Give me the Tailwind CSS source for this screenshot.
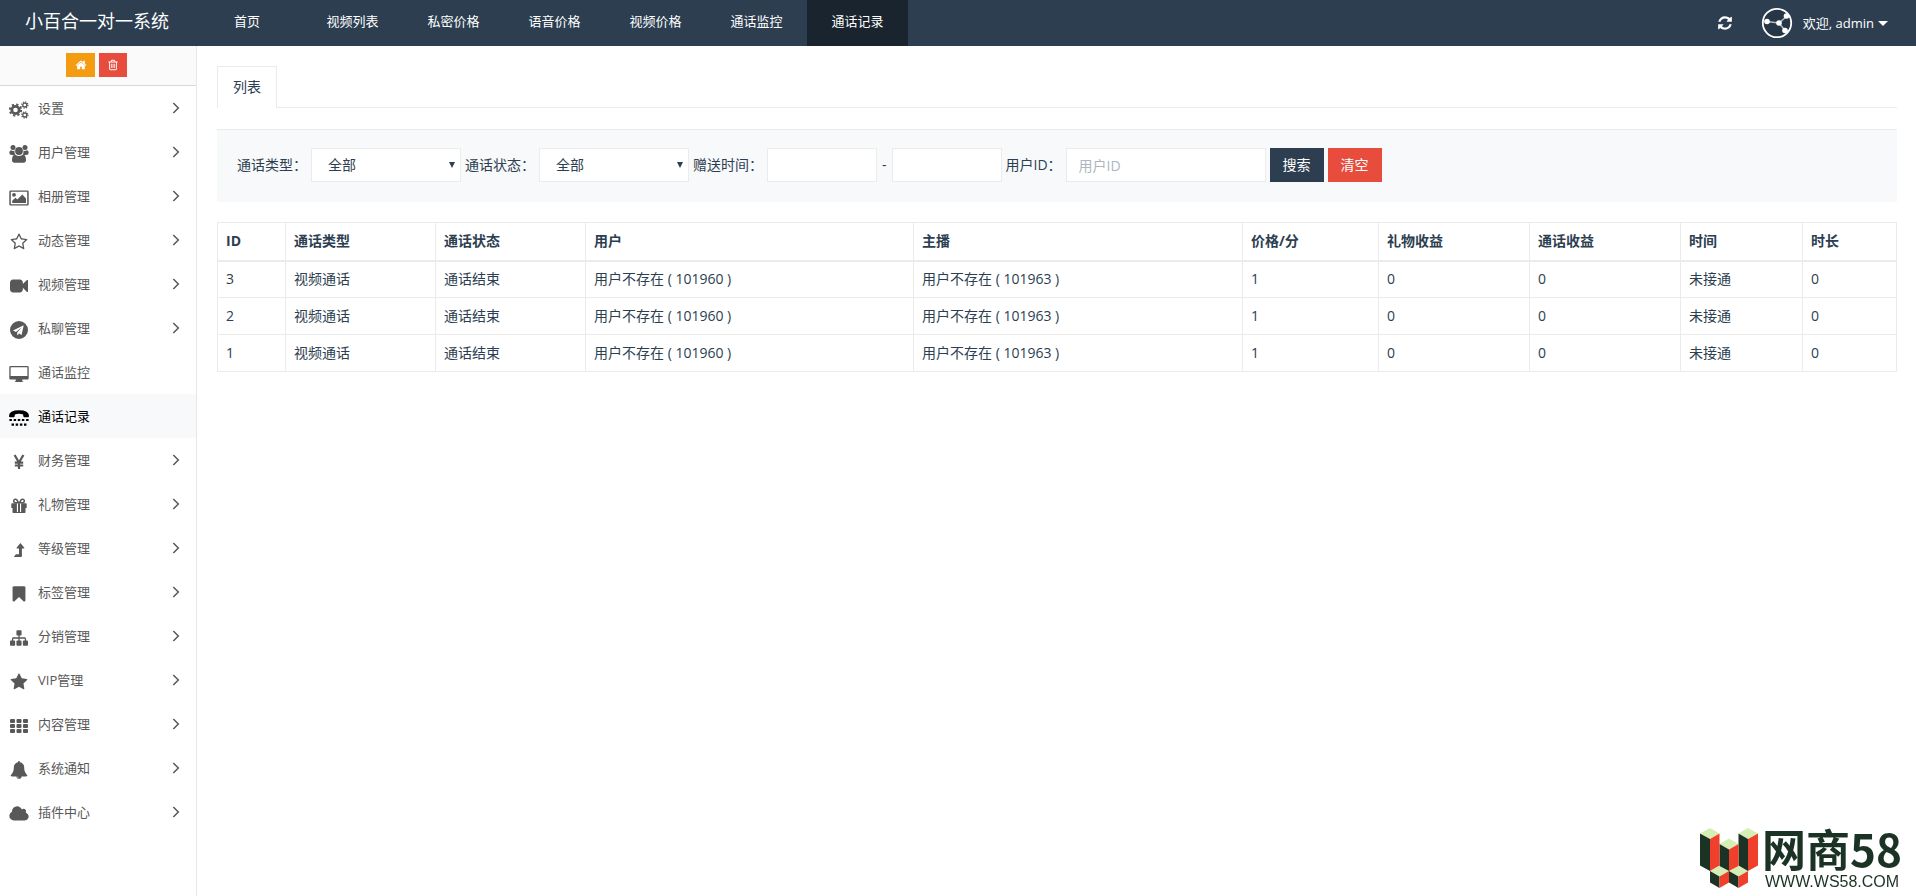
<!DOCTYPE html>
<html lang="zh-CN">
<head>
    <meta charset="UTF-8">
    <meta name="viewport" content="width=device-width, initial-scale=1.0">
    <title>小百合一对一系统</title>
    <script src="https://cdn.jsdelivr.net/npm/@tailwindcss/browser@4"></script>
</head>
<body class="min-h-screen flex flex-col bg-white text-sm text-[#2c3e50] font-['Open_Sans','Noto_Sans_CJK_SC',sans-serif]">

<!-- Icons -->
<svg class="hidden" xmlns="http://www.w3.org/2000/svg">
    <symbol id="i-home" viewBox="0 0 1792 1792"><path d="M1472 992v480q0 26-19 45t-45 19h-384v-384h-256v384h-384q-26 0-45-19t-19-45v-480q0-1 .5-3t.5-3l575-474 575 474q1 2 1 6zm223-69l-62 74q-8 9-21 11h-3q-13 0-21-7l-692-577-692 577q-12 8-24 7-13-2-21-11l-62-74q-8-10-7-23.5t11-21.5l719-599q32-26 76-26t76 26l244 204v-195q0-14 9-23t23-9h192q14 0 23 9t9 23v408l219 182q10 8 11 21.5t-7 23.5z"/></symbol>
    <symbol id="i-trash" viewBox="0 0 1792 1792"><path d="M704 736v576q0 14-9 23t-23 9h-64q-14 0-23-9t-9-23v-576q0-14 9-23t23-9h64q14 0 23 9t9 23zm256 0v576q0 14-9 23t-23 9h-64q-14 0-23-9t-9-23v-576q0-14 9-23t23-9h64q14 0 23 9t9 23zm256 0v576q0 14-9 23t-23 9h-64q-14 0-23-9t-9-23v-576q0-14 9-23t23-9h64q14 0 23 9t9 23zm128 724v-948h-896v948q0 22 7 40.5t14.5 27 10.5 8.5h832q3 0 10.5-8.5t14.5-27 7-40.5zm-672-1076h448l-48-117q-7-9-17-11h-317q-10 2-17 11zm928 32v64q0 14-9 23t-23 9h-96v948q0 83-47 143.5t-113 60.5h-832q-66 0-113-58.5t-47-141.5v-952h-96q-14 0-23-9t-9-23v-64q0-14 9-23t23-9h309l70-167q15-37 54-63t79-26h320q40 0 79 26t54 63l70 167h309q14 0 23 9t9 23z"/></symbol>
    <symbol id="i-refresh" viewBox="0 0 1792 1792"><path d="M1639 1056q0 5-1 7-64 268-268 434.5t-478 166.5q-146 0-282.5-55t-243.5-157l-129 129q-19 19-45 19t-45-19-19-45v-448q0-26 19-45t45-19h448q26 0 45 19t19 45-19 45l-137 137q71 66 161 102t187 36q134 0 250-65t186-179q11-17 53-117 8-23 30-23h192q13 0 22.5 9.5t9.5 22.5zm25-800v448q0 26-19 45t-45 19h-448q-26 0-45-19t-19-45 19-45l138-138q-148-137-349-137-134 0-250 65t-186 179q-11 17-53 117-8 23-30 23h-199q-13 0-22.5-9.5t-9.5-22.5v-7q65-268 270-434.5t480-166.5q146 0 284 55.5t245 156.5l130-129q19-19 45-19t45 19 19 45z"/></symbol>
    <symbol id="i-cogs" viewBox="0 0 20 18">
        <g fill="none" stroke="currentColor">
            <circle cx="6.5" cy="9" r="3.7" stroke-width="2.8"/>
            <circle cx="6.5" cy="9" r="5.6" stroke-width="2" stroke-dasharray="2.2 2.198"/>
            <circle cx="15.8" cy="4" r="2" stroke-width="1.3"/>
            <circle cx="15.8" cy="4" r="3.1" stroke-width="1.2" stroke-dasharray="1.2 1.235"/>
            <circle cx="15.8" cy="14" r="2" stroke-width="1.3"/>
            <circle cx="15.8" cy="14" r="3.1" stroke-width="1.2" stroke-dasharray="1.2 1.235"/>
        </g>
    </symbol>
    <symbol id="i-users" viewBox="0 0 20 18">
        <circle cx="4" cy="2.6" r="2.5"/><circle cx="16" cy="2.6" r="2.5"/><circle cx="10" cy="6" r="3.9"/>
        <path d="M2 5.2q2 1.3 3.500 .4q-.4 2.500 1 4.300H3Q.3 9.900 .3 8q0-2.600 1.700-2.800zM18 5.200q-2 1.300-3.500 .4q.4 2.500-1 4.300H17q2.700 0 2.700-1.900q0-2.600-1.700-2.800zM6.200 9.700q3.800 2.600 7.600 0q3.200 0 3.200 5.300q0 2.800-2.600 2.800H5.600Q3 17.800 3 15q0-5.300 3.200-5.300z"/>
    </symbol>
    <symbol id="i-image" viewBox="0 0 20 18">
        <path fill-rule="evenodd" d="M1.500 1.500h17q1.200 0 1.200 1.200v12.600q0 1.200-1.200 1.200h-17Q.3 16.500 .3 15.300V2.700q0-1.200 1.200-1.200zm.3 1.300v12.400h16.400V2.800z"/>
        <circle cx="5" cy="5.800" r="1.900"/><path d="M3.200 14v-2.200l3.200-3.100 1.900 1.800 5-5 3.700 3.900V14z"/>
    </symbol>
    <symbol id="i-star-o" viewBox="0 0 1792 1792"><path d="M1201 1004l306-297-422-62-189-382-189 382-422 62 306 297-73 421 378-199 377 199zm527-357q0 22-26 48l-363 354 86 500q1 7 1 20 0 50-41 50-19 0-40-12l-449-236-449 236q-22 12-40 12-21 0-31.500-14.500t-10.500-35.500q0-6 2-20l86-500-364-354q-25-27-25-48 0-37 56-46l502-73 225-455q19-41 49-41t49 41l225 455 502 73q56 9 56 46z"/></symbol>
    <symbol id="i-star" viewBox="0 0 1792 1792"><path d="M1728 647q0 22-26 48l-363 354 86 500q1 7 1 20 0 21-10.500 35.500t-30.500 14.500q-19 0-40-12l-449-236-449 236q-22 12-40 12-21 0-31.500-14.500t-10.500-35.500q0-6 2-20l86-500-364-354q-25-27-25-48 0-37 56-46l502-73 225-455q19-41 49-41t49 41l225 455 502 73q56 9 56 46z"/></symbol>
    <symbol id="i-video" viewBox="0 0 1792 1792"><path d="M1792 352v1088q0 42-39 59-13 5-25 5-27 0-45-19l-403-403v166q0 119-84.500 203.500t-203.500 84.500h-704q-119 0-203.500-84.500t-84.500-203.500v-704q0-119 84.500-203.500t203.500-84.500h704q119 0 203.500 84.500t84.500 203.500v165l403-402q18-19 45-19 12 0 25 5 39 17 39 59z"/></symbol>
    <symbol id="i-telegram" viewBox="0 0 18 18"><path fill-rule="evenodd" d="M9 0a9 9 0 1 1 0 18a9 9 0 0 1 0-18zM13.700 4.200L3 9.400l3 1.500 5.800-4.600-4.600 5.300v3l1.900-2 2.500 1.300z"/></symbol>
    <symbol id="i-desktop" viewBox="0 0 20 18"><path fill-rule="evenodd" d="M1.600 1h16.800q1.300 0 1.300 1.300v10.900q0 1.300-1.300 1.300h-5.200v1.200q.8 .4 .8 1.300H6q0-.9 .8-1.300v-1.200H1.600Q.3 14.500 .3 13.200V2.300Q.3 1 1.600 1zm0 1.200v8.900h16.800V2.200z"/></symbol>
    <symbol id="i-tty" viewBox="0 0 18 16">
        <path d="M0 6.200Q0 1 9 1t9 5.200q0 1.100-1 1.100h-3.200q-1 0-1-1V4.800Q9 3.600 5.200 4.800v1.500q0 1-1 1H1q-1 0-1-1.100z"/>
        <path d="M.4 8.800h2.200v2H.4zM4.200 8.800h2.200v2H4.200zM7.900 8.800h2.200v2H7.900zM11.600 8.800h2.200v2h-2.200zM15.400 8.800h2.200v2h-2.200zM2.300 13h2.200v2H2.300zM6 13h2.200v2H6zM9.800 13H12v2H9.800zM13.500 13h2.200v2h-2.200z"/>
    </symbol>
    <symbol id="i-jpy" viewBox="0 0 18 18"><path fill="none" stroke="currentColor" stroke-width="2.200" d="M4.600 2L9 9.600 13.400 2M9 9v7M4.800 9.700h8.400M4.800 12.500h8.400"/></symbol>
    <symbol id="i-gift" viewBox="0 0 18 18">
        <path fill="none" stroke="currentColor" stroke-width="1.500" d="M8.600 5.800H5.500a1.800 1.800 0 1 1 1.300-3zM9.400 5.800h3.100a1.800 1.800 0 1 0-1.300-3z"/>
        <path d="M2.100 6.300h4.800v9.800H3.300q-.8 0-.8-.8v-4.200h-.4q-.8 0-.8-.6V7q0-.7 .8-.7zM15.900 6.300h-4.800v9.800h3.600q.8 0 .8-.8v-4.200h.4q.8 0 .8-.6V7q0-.7-.8-.7zM6.900 14.900h4.200v1.200H6.900zM8 6.300h2v9H8z"/>
    </symbol>
    <symbol id="i-level" viewBox="0 0 18 18"><path d="M10.400 2l3.900 4.700q.4 .7-.4 .7h-2v7.800q0 .8-.8 .8H4.400L4 15.600l2-2.300h3V7.400H7q-.8 0-.4-.7z"/></symbol>
    <symbol id="i-bookmark" viewBox="0 0 1792 1792"><path d="M1420 128q23 0 44 9 33 13 52.500 41t19.500 62v1289q0 34-19.500 62t-52.500 41q-19 8-44 8-48 0-83-32l-441-424-441 424q-36 33-83 33-23 0-44-9-33-13-52.500-41t-19.500-62v-1289q0-34 19.500-62t52.500-41q21-9 44-9h1048z"/></symbol>
    <symbol id="i-sitemap" viewBox="0 0 1792 1792"><path d="M1792 1248v320q0 40-28 68t-68 28h-320q-40 0-68-28t-28-68v-320q0-40 28-68t68-28h96v-192h-512v192h96q40 0 68 28t28 68v320q0 40-28 68t-68 28h-320q-40 0-68-28t-28-68v-320q0-40 28-68t68-28h96v-192h-512v192h96q40 0 68 28t28 68v320q0 40-28 68t-68 28h-320q-40 0-68-28t-28-68v-320q0-40 28-68t68-28h96v-192q0-52 38-90t90-38h512v-192h-96q-40 0-68-28t-28-68v-320q0-40 28-68t68-28h320q40 0 68 28t28 68v320q0 40-28 68t-68 28h-96v192h512q52 0 90 38t38 90v192h96q40 0 68 28t28 68z"/></symbol>
    <symbol id="i-th" viewBox="0 0 18 18">
        <g id="th-row"><rect y="2" width="5" height="4" rx="1"/><rect x="6.500" y="2" width="5" height="4" rx="1"/><rect x="13" y="2" width="5" height="4" rx="1"/></g>
        <use href="#th-row" y="5"/><use href="#th-row" y="10"/>
    </symbol>
    <symbol id="i-bell" viewBox="0 0 1792 1792"><path d="M912 1696q0-16-16-16-59 0-101.500-42.500t-42.500-101.500q0-16-16-16t-16 16q0 73 51.500 124.500t124.500 51.500q16 0 16-16zm816-288q0 52-38 90t-90 38h-448q0 106-75 181t-181 75-181-75-75-181h-448q-52 0-90-38t-38-90q50-42 91-88t85-119.500 74.500-158.500 50-206 19.500-260q0-152 117-282.500t307-158.500q-8-19-8-39 0-40 28-68t68-28 68 28 28 68q0 20-8 39 190 28 307 158.500t117 282.500q0 139 19.500 260t50 206 74.500 158.500 85 119.500 91 88z"/></symbol>
    <symbol id="i-cloud" viewBox="64 0 1920 1792"><path d="M1984 1152q0 159-112.500 271.500t-271.500 112.500h-1088q-185 0-316.500-131.500t-131.500-316.500q0-132 71-241.500t187-163.500q-2-28-2-43 0-212 150-362t362-150q158 0 286.500 88t187.500 230q70-62 166-62 106 0 181 75t75 181q0 75-41 138 129 30 213 134.500t84 239.500z"/></symbol>
    <symbol id="i-angle" viewBox="0 0 8 12"><path fill="none" stroke="currentColor" stroke-width="1.500" d="M1.300 1l5 5-5 5"/></symbol>
</svg>

<!-- Header -->
<header class="flex h-[46px] bg-[#2c3e50] text-white text-[13px] whitespace-nowrap">
    <a href="#" class="w-48 pl-[25px] text-lg leading-[42px]">小百合一对一系统</a>
    <nav class="flex text-center leading-[43px]">
        <a href="#" class="w-[110px]">首页</a>
        <a href="#" class="w-[101px]">视频列表</a>
        <a href="#" class="w-[101px]">私密价格</a>
        <a href="#" class="w-[101px]">语音价格</a>
        <a href="#" class="w-[101px]">视频价格</a>
        <a href="#" class="w-[101px]">通话监控</a>
        <a href="#" class="w-[101px] bg-[#1a242f]">通话记录</a>
    </nav>
    <div class="ml-auto pr-7 flex items-center">
        <button type="button" aria-label="刷新" class="mr-7"><svg class="w-4 h-4 fill-current"><use href="#i-refresh"/></svg></button>
        <a href="#" class="flex items-center">
            <svg class="w-8 h-8 mr-[10px]" viewBox="0 0 32 32">
                <circle cx="16" cy="16" r="14.200" fill="#263646" stroke="#fff" stroke-width="1.800"/>
                <path d="M5.500 14.500L18 16l7.500-6.500M18 16l6 7.500" stroke="#aeb8c2" stroke-width="1.600" fill="none"/>
                <g fill="#fff"><circle cx="6" cy="14.500" r="2.800"/><circle cx="18" cy="16" r="2.800"/><circle cx="25.500" cy="9" r="2.800"/><circle cx="24" cy="23.500" r="2.800"/></g>
            </svg>
            欢迎, admin
            <svg class="w-[10px] h-[5px] ml-1 fill-current" viewBox="0 0 8 4"><path d="M0 0h8L4 4z"/></svg>
        </a>
    </div>
</header>

<div class="flex grow">
    <!-- Sidebar -->
    <aside class="w-[197px] shrink-0 border-r border-[#e7e7e7] text-[#585858] text-[13px]">
        <div class="h-10 pt-[7px] flex justify-center gap-1 bg-[#fafafa] border-b border-[#d8d8d8] pr-[3px]">
            <button type="button" aria-label="首页" class="w-[29px] h-6 flex items-center justify-center bg-[#f39c12] text-white"><svg class="w-3 h-3 fill-current"><use href="#i-home"/></svg></button>
            <button type="button" aria-label="清除缓存" class="w-7 h-6 flex items-center justify-center bg-[#e74c3c] text-white"><svg class="w-3 h-3 fill-current"><use href="#i-trash"/></svg></button>
        </div>
        <ul>
            <li><a href="#" class="flex items-center h-11 pl-[9px] pr-4"><svg class="w-5 h-[18px] mt-[3px] mr-[9px] fill-current"><use href="#i-cogs"/></svg>设置<svg class="w-2 h-3 ml-auto"><use href="#i-angle"/></svg></a></li>
            <li><a href="#" class="flex items-center h-11 pl-[9px] pr-4"><svg class="w-5 h-[18px] mt-[3px] mr-[9px] fill-current"><use href="#i-users"/></svg>用户管理<svg class="w-2 h-3 ml-auto"><use href="#i-angle"/></svg></a></li>
            <li><a href="#" class="flex items-center h-11 pl-[9px] pr-4"><svg class="w-5 h-[18px] mt-[3px] mr-[9px] fill-current"><use href="#i-image"/></svg>相册管理<svg class="w-2 h-3 ml-auto"><use href="#i-angle"/></svg></a></li>
            <li><a href="#" class="flex items-center h-11 pl-[9px] pr-4"><svg class="w-5 h-[18px] mt-[3px] mr-[9px] fill-current"><use href="#i-star-o"/></svg>动态管理<svg class="w-2 h-3 ml-auto"><use href="#i-angle"/></svg></a></li>
            <li><a href="#" class="flex items-center h-11 pl-[9px] pr-4"><svg class="w-5 h-[18px] mt-[3px] mr-[9px] fill-current"><use href="#i-video"/></svg>视频管理<svg class="w-2 h-3 ml-auto"><use href="#i-angle"/></svg></a></li>
            <li><a href="#" class="flex items-center h-11 pl-[9px] pr-4"><svg class="w-5 h-[18px] mt-[3px] mr-[9px] fill-current"><use href="#i-telegram"/></svg>私聊管理<svg class="w-2 h-3 ml-auto"><use href="#i-angle"/></svg></a></li>
            <li><a href="#" class="flex items-center h-11 pl-[9px] pr-4"><svg class="w-5 h-[18px] mt-[3px] mr-[9px] fill-current"><use href="#i-desktop"/></svg>通话监控</a></li>
            <li><a href="#" class="flex items-center h-11 pl-[9px] pr-4 bg-[#f8f9fb] text-black"><svg class="w-5 h-[18px] mt-[3px] mr-[9px] fill-current"><use href="#i-tty"/></svg>通话记录</a></li>
            <li><a href="#" class="flex items-center h-11 pl-[9px] pr-4"><svg class="w-5 h-[18px] mt-[3px] mr-[9px] fill-current"><use href="#i-jpy"/></svg>财务管理<svg class="w-2 h-3 ml-auto"><use href="#i-angle"/></svg></a></li>
            <li><a href="#" class="flex items-center h-11 pl-[9px] pr-4"><svg class="w-5 h-[18px] mt-[3px] mr-[9px] fill-current"><use href="#i-gift"/></svg>礼物管理<svg class="w-2 h-3 ml-auto"><use href="#i-angle"/></svg></a></li>
            <li><a href="#" class="flex items-center h-11 pl-[9px] pr-4"><svg class="w-5 h-[18px] mt-[3px] mr-[9px] fill-current"><use href="#i-level"/></svg>等级管理<svg class="w-2 h-3 ml-auto"><use href="#i-angle"/></svg></a></li>
            <li><a href="#" class="flex items-center h-11 pl-[9px] pr-4"><svg class="w-5 h-[18px] mt-[3px] mr-[9px] fill-current"><use href="#i-bookmark"/></svg>标签管理<svg class="w-2 h-3 ml-auto"><use href="#i-angle"/></svg></a></li>
            <li><a href="#" class="flex items-center h-11 pl-[9px] pr-4"><svg class="w-5 h-[18px] mt-[3px] mr-[9px] fill-current"><use href="#i-sitemap"/></svg>分销管理<svg class="w-2 h-3 ml-auto"><use href="#i-angle"/></svg></a></li>
            <li><a href="#" class="flex items-center h-11 pl-[9px] pr-4"><svg class="w-5 h-[18px] mt-[3px] mr-[9px] fill-current"><use href="#i-star"/></svg>VIP管理<svg class="w-2 h-3 ml-auto"><use href="#i-angle"/></svg></a></li>
            <li><a href="#" class="flex items-center h-11 pl-[9px] pr-4"><svg class="w-5 h-[18px] mt-[3px] mr-[9px] fill-current"><use href="#i-th"/></svg>内容管理<svg class="w-2 h-3 ml-auto"><use href="#i-angle"/></svg></a></li>
            <li><a href="#" class="flex items-center h-11 pl-[9px] pr-4"><svg class="w-5 h-[18px] mt-[3px] mr-[9px] fill-current"><use href="#i-bell"/></svg>系统通知<svg class="w-2 h-3 ml-auto"><use href="#i-angle"/></svg></a></li>
            <li><a href="#" class="flex items-center h-11 pl-[9px] pr-4"><svg class="w-5 h-[18px] mt-[3px] mr-[9px] fill-current"><use href="#i-cloud"/></svg>插件中心<svg class="w-2 h-3 ml-auto"><use href="#i-angle"/></svg></a></li>
        </ul>
    </aside>

    <!-- Content -->
    <main class="grow p-5 pr-[19px]">
        <div class="flex border-b border-[#ebebeb]">
            <a href="#" class="-mb-px px-[15px] h-[42px] leading-[40px] border border-b-0 border-[#ebebeb] bg-white">列表</a>
        </div>

        <form class="mt-[21px] px-5 pt-[18px] pb-5 flex flex-wrap items-center gap-1 bg-[#f8f9fb] border-t border-[#e8eaec]">
            <label for="type">通话类型：</label>
            <div class="relative">
                <select id="type" class="appearance-none block w-[150px] h-[34px] pl-4 border border-[#ebebeb] bg-white"><option>全部</option></select>
                <svg class="absolute right-[6px] top-[14px] w-[6px] h-[6px] fill-current pointer-events-none" viewBox="0 0 6 6"><path d="M0 0h6L3 6z"/></svg>
            </div>
            <label for="status">通话状态：</label>
            <div class="relative">
                <select id="status" class="appearance-none block w-[150px] h-[34px] pl-4 border border-[#ebebeb] bg-white"><option>全部</option></select>
                <svg class="absolute right-[6px] top-[14px] w-[6px] h-[6px] fill-current pointer-events-none" viewBox="0 0 6 6"><path d="M0 0h6L3 6z"/></svg>
            </div>
            <label for="start">赠送时间：</label>
            <input id="start" type="text" class="w-[110px] h-[34px] px-3 border border-[#ebebeb] bg-white">
            <span class="px-px">-</span>
            <input type="text" aria-label="结束时间" class="w-[110px] h-[34px] px-3 border border-[#ebebeb] bg-white">
            <label for="uid">用户ID：</label>
            <input id="uid" type="text" placeholder="用户ID" class="w-[200px] h-[34px] px-3 border border-[#ebebeb] bg-white placeholder:text-[#acb6c0]">
            <button type="submit" class="w-[54px] h-[34px] bg-[#2c3e50] text-white">搜索</button>
            <button type="reset" class="w-[54px] h-[34px] bg-[#e74c3c] text-white">清空</button>
        </form>

        <table class="mt-5 w-full table-fixed border-collapse text-left leading-5 [&_th]:h-[38px] [&_td]:h-[37px] [&_th]:px-2 [&_td]:px-2 [&_th]:border [&_td]:border [&_th]:border-[#ebebeb] [&_td]:border-[#ebebeb] [&_th]:border-b-2">
            <colgroup>
                <col class="w-[68px]"><col class="w-[150px]"><col class="w-[150px]"><col class="w-[328px]"><col class="w-[329px]">
                <col class="w-[136px]"><col class="w-[151px]"><col class="w-[151px]"><col class="w-[122px]"><col class="w-[94px]">
            </colgroup>
            <thead>
                <tr><th>ID</th><th>通话类型</th><th>通话状态</th><th>用户</th><th>主播</th><th>价格/分</th><th>礼物收益</th><th>通话收益</th><th>时间</th><th>时长</th></tr>
            </thead>
            <tbody>
                <tr><td>3</td><td>视频通话</td><td>通话结束</td><td>用户不存在 ( 101960 )</td><td>用户不存在 ( 101963 )</td><td>1</td><td>0</td><td>0</td><td>未接通</td><td>0</td></tr>
                <tr><td>2</td><td>视频通话</td><td>通话结束</td><td>用户不存在 ( 101960 )</td><td>用户不存在 ( 101963 )</td><td>1</td><td>0</td><td>0</td><td>未接通</td><td>0</td></tr>
                <tr><td>1</td><td>视频通话</td><td>通话结束</td><td>用户不存在 ( 101960 )</td><td>用户不存在 ( 101963 )</td><td>1</td><td>0</td><td>0</td><td>未接通</td><td>0</td></tr>
            </tbody>
        </table>
    </main>
</div>

<!-- Site badge -->
<div class="fixed right-[14px] bottom-1 flex items-end gap-1 text-[#1b3324]">
    <svg class="w-[58px] h-[60px] mb-1" viewBox="0 0 58 60">
        <g fill="#d5eeb4"><path d="M0 5.500L10 0l9.500 5.500L10 11zM38.500 5.500L48 0l10 5.500L48 11zM19.500 16l9.500-5.500 9.500 5.500-9.500 5.500zM10 43l9.500-5 9.500 5-9.500 5.500zM29 43l9.500-5 9.500 5-9.500 5.500z"/></g>
        <g fill="#1b3324"><path d="M0 5.500L10 11v32L0 37.500zM38.500 5.500L48 11v32l-9.500-5.500zM19.500 16l9.500 5.500V43l-9.500-5zM10 43l9.500 5.500V60L10 54.500zM29 43l9.500 5.500V60L29 54.500z"/></g>
        <g fill="#f0402c"><path d="M10 11l9.500-5.500v32L10 43zM48 11l10-5.500v32L48 43zM29 21.500l9.500-5.500v22L29 43zM19.500 48.500L29 43v11.500L19.500 60zM38.500 48.500L48 43v11.500L38.500 60z"/></g>
    </svg>
    <div class="flex flex-col items-center">
        <span class="text-[44px] leading-[48px] font-bold font-['Noto_Sans_CJK_SC',sans-serif]">网商58</span>
        <span class="text-base leading-5 font-['Liberation_Sans',sans-serif]">WWW.WS58.COM</span>
    </div>
</div>
</body>
</html>
